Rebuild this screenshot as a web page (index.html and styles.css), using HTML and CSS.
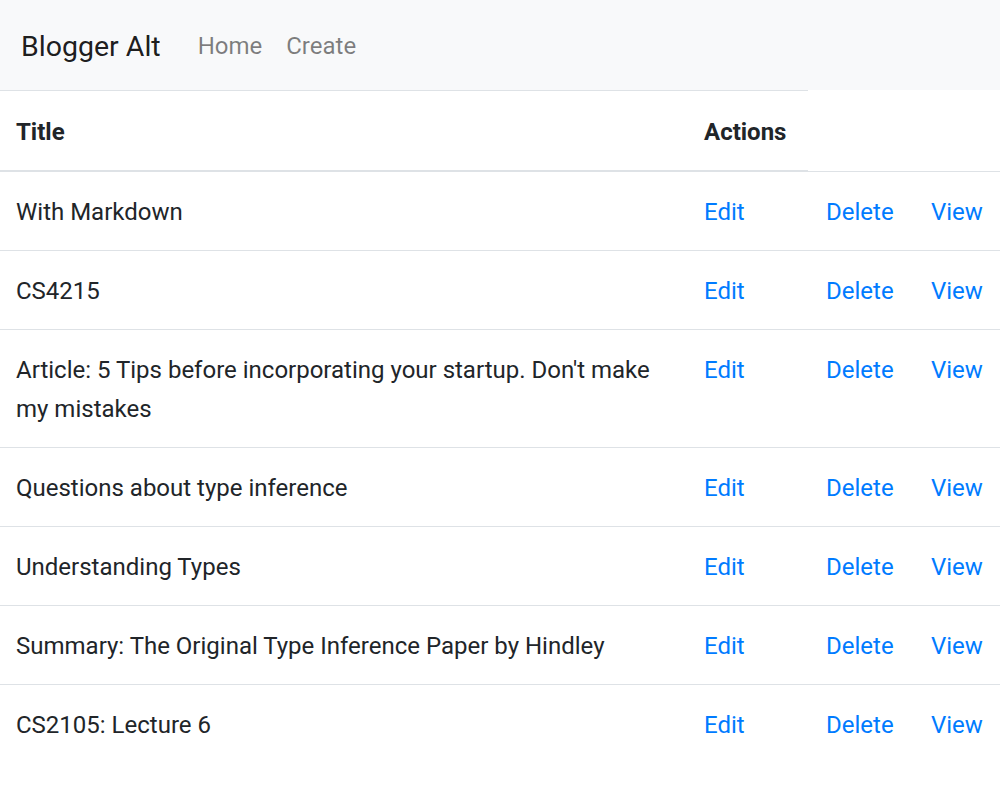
FILE: index.html
```html
<!DOCTYPE html>
<html>
<head>
<meta charset="utf-8">
<link rel="stylesheet" href="styles.css">
</head>
<body>
<nav class="navbar">
  <a class="brand" href="#">Blogger Alt</a>
  <ul class="nav">
    <li><a href="#">Home</a></li>
    <li><a href="#">Create</a></li>
  </ul>
</nav>
<table class="posts">
  <colgroup>
    <col class="c-title">
    <col class="c-edit">
    <col class="c-delete">
    <col class="c-view">
  </colgroup>
  <thead>
    <tr><th>Title</th><th>Actions</th></tr>
  </thead>
  <tbody>
    <tr><td>With Markdown</td><td><a href="#">Edit</a></td><td class="del"><a href="#">Delete</a></td><td><a href="#">View</a></td></tr>
    <tr><td>CS4215</td><td><a href="#">Edit</a></td><td class="del"><a href="#">Delete</a></td><td><a href="#">View</a></td></tr>
    <tr><td>Article: 5 Tips before incorporating your startup. Don't make my mistakes</td><td><a href="#">Edit</a></td><td class="del"><a href="#">Delete</a></td><td><a href="#">View</a></td></tr>
    <tr><td>Questions about type inference</td><td><a href="#">Edit</a></td><td class="del"><a href="#">Delete</a></td><td><a href="#">View</a></td></tr>
    <tr><td>Understanding Types</td><td><a href="#">Edit</a></td><td class="del"><a href="#">Delete</a></td><td><a href="#">View</a></td></tr>
    <tr><td>Summary: The Original Type Inference Paper by Hindley</td><td><a href="#">Edit</a></td><td class="del"><a href="#">Delete</a></td><td><a href="#">View</a></td></tr>
    <tr><td>CS2105: Lecture 6</td><td><a href="#">Edit</a></td><td class="del"><a href="#">Delete</a></td><td><a href="#">View</a></td></tr>
  </tbody>
</table>
</body>
</html>
```
FILE: styles.css
```css
html, body {
  margin: 0;
  padding: 0;
  background: #fff;
}
body {
  font-family: Roboto, "Liberation Sans", sans-serif;
  font-size: 24px;
  line-height: 39px;
  color: #212529;
}
a {
  text-decoration: none;
}
.navbar {
  display: flex;
  align-items: center;
  height: 90px;
  padding: 2px 21px 0;
  background: #f8f9fa;
  box-sizing: border-box;
}
.brand {
  font-size: 28.5px;
  color: rgba(0, 0, 0, 0.9);
  margin-right: 37px;
}
.nav {
  display: flex;
  list-style: none;
  margin: 0;
  padding: 0;
  gap: 24px;
}
.nav a {
  color: rgba(0, 0, 0, 0.5);
}
.posts {
  width: 1000px;
  table-layout: fixed;
  border-collapse: collapse;
}
.c-title { width: 688px; }
.c-edit { width: 120px; }
.c-delete { width: 107px; }
.c-view { width: 85px; }
.posts th, .posts td {
  text-align: left;
  vertical-align: top;
  border-top: 1px solid #dee2e6;
}
.posts th {
  padding: 22px 16px 18px;
  font-weight: 700;
  border-bottom: 2px solid #dee2e6;
}
.posts td {
  padding: 21px 16px 18px;
}
.posts td.del {
  padding-left: 18px;
}
.posts td a {
  color: #007bff;
}
```
